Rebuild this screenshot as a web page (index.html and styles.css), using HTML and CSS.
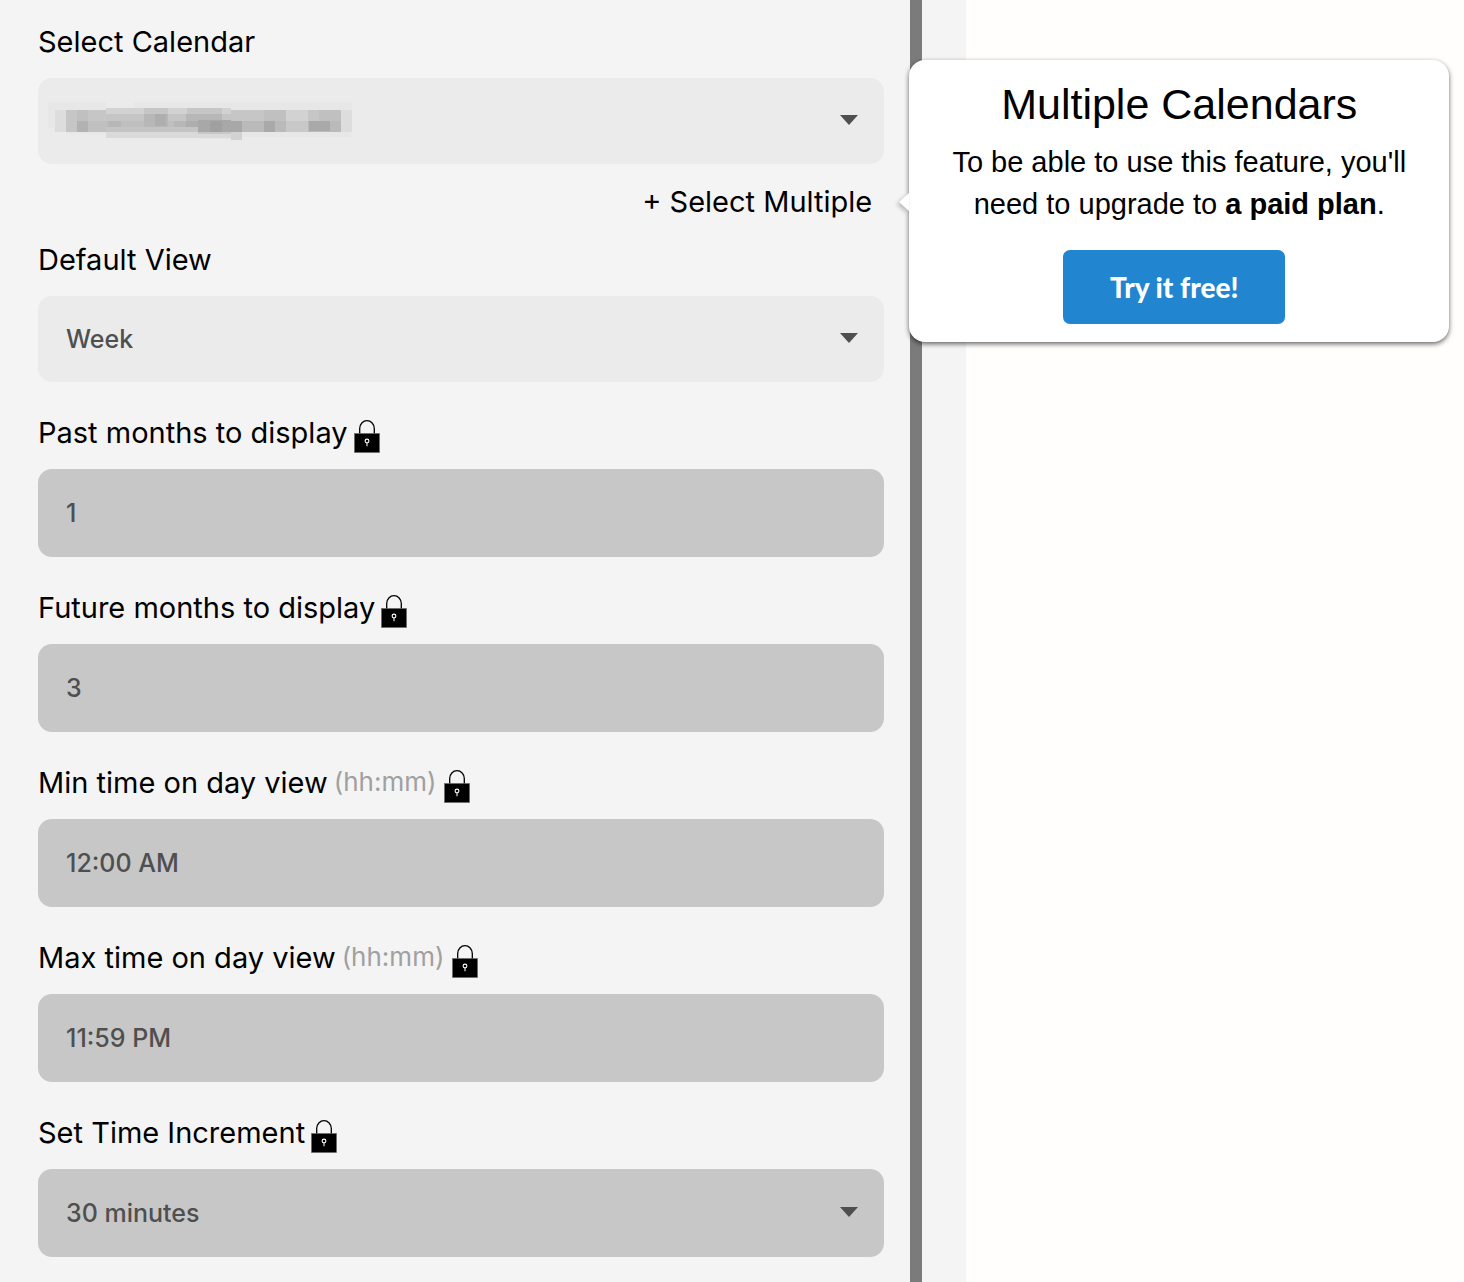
FILE: index.html
```html
<!DOCTYPE html>
<html lang="en">
  <head>
    <meta charset="UTF-8" />
    <meta name="viewport" content="width=device-width, initial-scale=1.0" />
    <title>Calendar Settings</title>
    <link rel="stylesheet" href="styles.css">
  </head>

  <body>
    <!-- lock icon, shared by all the paid fields -->
    <svg class="sprite" aria-hidden="true">
      <symbol id="lock" viewBox="0 0 26 33">
        <path d="M5.7 14V8.5a7.3 7.8 0 0 1 14.6 0V14" fill="none" stroke="#000" stroke-width="1.3" />
        <rect x="0.4" y="13.4" width="25.2" height="19.2" fill="#000" stroke="#777" stroke-width="0.6" />
        <circle cx="13" cy="21" r="1.9" fill="none" stroke="#fff" stroke-width="1.1" />
        <path d="M13 22.8v3.4" stroke="#ddd" stroke-width="1.2" />
      </symbol>
    </svg>

    <div class="page">
      <form class="settings">
        <div class="field first">
          <label class="label" for="calendar">Select Calendar</label>
          <div class="select-wrap">
            <select class="control" id="calendar">
              <option></option>
            </select>
            <!-- masked account name -->
            <svg class="mask" width="320" height="44" viewBox="0 0 320 44" shape-rendering="crispEdges" aria-hidden="true">
              <path fill="#e7e7e7" d="M0 6h58v32H18v-3H6v-3H0zM86 6h100v37h-36v-3H86zM186 6h118v26h-1v9H186z" />
              <path fill="#dddddd" d="M7 14h11v22H7zM293 14h11v22h-11z" />
              <path fill="#c6c6c6" d="M18 14h40v22H18zM183 14h110v22H183z" />
              <path fill="#c0c0c0" d="M29 14h11v11H29zM40 25h18v11H40zM216 14h22v11h-22zM271 14h22v11h-22z" />
              <path fill="#b2b2b2" d="M29 25h11v11H29z" />
              <path fill="#d2d2d2" d="M58 12h125v6H58zM238 14h22v11h-22zM183 36h11v9h-11z" />
              <path fill="#c6c6c6" d="M96 12h24v6H96zM139 12h35v6h-35z" />
              <path fill="#c5c5c5" d="M58 18h125v7H58z" />
              <path fill="#bfbfbf" d="M58 25h125v6H58z" />
              <path fill="#c4c4c4" d="M58 31h125v5H58z" />
              <path fill="#dadada" d="M58 36h125v6H58z" />
              <path fill="#b7b7b7" d="M96 18h24v13H96zM60 25h13v6H60zM138 18h36v7h-36zM126 25h24v6h-24z" />
              <path fill="#aeaeae" d="M107 18h11v12h-11zM138 25h12v6h-12z" />
              <path fill="#a8a8a8" d="M150 24h33v12h-33zM183 25h11v11h-11z" />
              <path fill="#a0a0a0" d="M162 25h12v11h-12z" />
              <path fill="#bababa" d="M194 25h44v11h-44zM260 25h33v11h-33z" />
              <path fill="#a9a9a9" d="M216 25h11v11h-11zM261 25h21v10h-21z" />
              <path fill="#c8c8c8" d="M150 36h33v2h-33zM238 25h22v11h-22z" />
            </svg>
          </div>
        </div>

        <div class="multiple-row">
          <button class="multiple" type="button" aria-describedby="upgrade">+ Select Multiple</button>
          <div class="popover" id="upgrade" role="tooltip">
            <h2 class="popover-title">Multiple Calendars</h2>
            <p class="popover-text">To be able to use this feature, you'll need to upgrade to <b>a paid plan</b>.</p>
            <div class="popover-action">
              <button class="try" type="button">Try it free!</button>
            </div>
          </div>
        </div>

        <div class="field first">
          <label class="label" for="view">Default View</label>
          <div class="select-wrap">
            <select class="control" id="view">
              <option>Week</option>
            </select>
          </div>
        </div>

        <div class="field locked">
          <label class="label" for="past">Past months to display
            <svg class="lock"><use href="#lock" /></svg>
          </label>
          <input class="control" id="past" type="text" value="1" readonly />
        </div>

        <div class="field locked">
          <label class="label" for="future">Future months to display
            <svg class="lock"><use href="#lock" /></svg>
          </label>
          <input class="control" id="future" type="text" value="3" readonly />
        </div>

        <div class="field locked">
          <label class="label" for="min">Min time on day view
            <span class="hint">(hh:mm)</span>
            <svg class="lock"><use href="#lock" /></svg>
          </label>
          <input class="control" id="min" type="text" value="12:00 AM" readonly />
        </div>

        <div class="field locked">
          <label class="label" for="max">Max time on day view
            <span class="hint">(hh:mm)</span>
            <svg class="lock"><use href="#lock" /></svg>
          </label>
          <input class="control" id="max" type="text" value="11:59 PM" readonly />
        </div>

        <div class="field locked">
          <label class="label" for="increment">Set Time Increment
            <svg class="lock"><use href="#lock" /></svg>
          </label>
          <div class="select-wrap">
            <select class="control" id="increment">
              <option>30 minutes</option>
            </select>
          </div>
        </div>
      </form>
      <div class="divider"></div>
      <main class="preview"></main>
    </div>
  </body>
</html>
```
FILE: styles.css
```css
* {
  margin: 0;
  padding: 0;
  box-sizing: border-box;
}
body {
  background: #f4f4f4;
  color: #000;
  font-family: Inter, "Liberation Sans", sans-serif;
  font-size: 29px;
}
button,
input,
select {
  font: inherit;
  border: none;
}
.sprite {
  display: none;
}
.page {
  display: flex;
  min-height: 100vh;
}

/* left panel */
.settings {
  width: calc(66% - 56px);
  padding: 22px 26px 25px 38px;
}
.divider {
  width: 12px;
  background: #7b7b7b;
}
.preview {
  flex: 1;
  margin-left: 44px;
  background: #fffefd;
}

.field {
  margin-top: 31px;
}
.field.first {
  margin-top: 0;
}
.label {
  display: flex;
  align-items: flex-end;
  gap: 6px;
  height: 40px;
  margin-bottom: 16px;
  line-height: 40px;
}
.hint {
  margin-right: 2px;
  color: #a0a0a0;
  font-size: 26px;
  line-height: 38px;
  align-self: flex-start;
}
.lock {
  width: 26px;
  height: 33px;
}
.control {
  display: block;
  width: 100%;
  height: 86px;
  padding: 0 28px;
  border-radius: 14px;
  background: #ebebeb;
  color: #4f4f4f;
  font-size: 25px;
  font-weight: 500;
  appearance: none;
}
.locked .control {
  height: 88px;
  background: #c7c7c7;
}

.select-wrap {
  position: relative;
}
/* drop-down arrow */
.select-wrap::after {
  content: "";
  position: absolute;
  top: calc(50% - 6px);
  right: 26px;
  border: 9px solid transparent;
  border-top: 10px solid #4f4f4f;
  border-bottom: none;
  pointer-events: none;
}
.mask {
  position: absolute;
  left: 10px;
  top: 18px;
  pointer-events: none;
}

.multiple-row {
  position: relative;
  display: flex;
  justify-content: flex-end;
  margin: 18px 0;
  padding-right: 12px;
}
.multiple {
  height: 40px;
  background: none;
  line-height: 40px;
}

/* upgrade popover */
.popover {
  position: absolute;
  left: calc(100% + 25px);
  top: -122px;
  z-index: 1;
  width: 540px;
  padding: 18px 40px;
  border-radius: 16px;
  background: #fff;
  box-shadow: 0 2px 5px rgba(0, 0, 0, 0.6);
  font-family: "Liberation Sans", Arial, sans-serif;
  text-align: center;
}
.popover::before {
  content: "";
  position: absolute;
  left: -10px;
  top: 133px;
  border: 9px solid transparent;
  border-right: 10px solid #fff;
  border-left: none;
  filter: drop-shadow(-2px 2px 2px rgba(0, 0, 0, 0.25));
}
.popover-title {
  font-size: 43px;
  font-weight: 400;
  line-height: 52px;
}
.popover-text {
  margin: 11px 0 25px;
  font-size: 29px;
  line-height: 42px;
}
.popover-action {
  padding-right: 10px;
}
.try {
  width: 222px;
  height: 74px;
  border-radius: 7px;
  background: #2185d0;
  color: #fff;
  font-family: Lato, sans-serif;
  font-size: 28px;
  font-weight: 900;
}
```
